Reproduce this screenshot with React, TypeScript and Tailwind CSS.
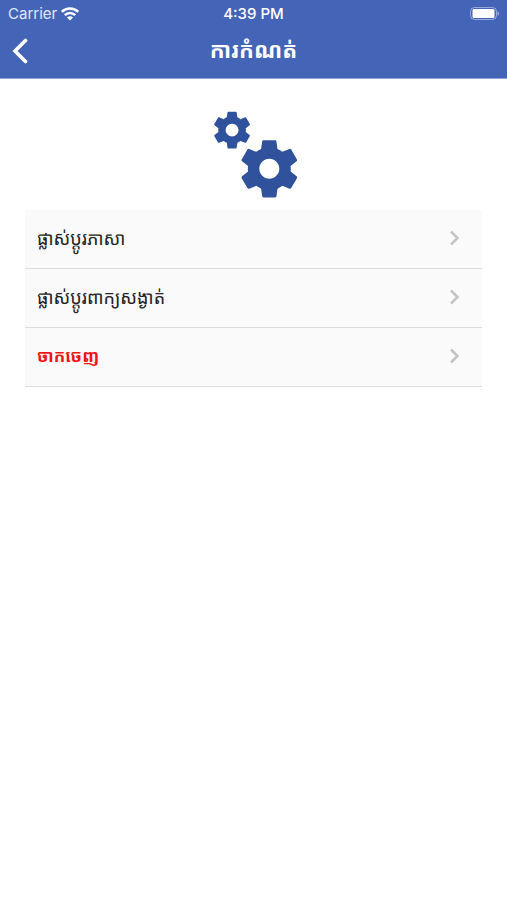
import React from 'react';

const GEAR =
  'M19.43 12.98c.04-.32.07-.64.07-.98s-.03-.66-.07-.98l2.11-1.65c.19-.15.24-.42.12-.64l-2-3.46c-.12-.22-.39-.3-.61-.22l-2.49 1c-.52-.4-1.08-.73-1.69-.98l-.38-2.65C14.46 2.18 14.25 2 14 2h-4c-.25 0-.46.18-.49.42l-.38 2.65c-.61.25-1.17.59-1.69.98l-2.49-1c-.23-.09-.49 0-.61.22l-2 3.46c-.13.22-.07.49.12.64l2.11 1.65c-.04.32-.07.65-.07.98s.03.66.07.98l-2.11 1.65c-.19.15-.24.42-.12.64l2 3.46c.12.22.39.3.61.22l2.49-1c.52.4 1.08.73 1.69.98l.38 2.65c.03.24.24.42.49.42h4c.25 0 .46-.18.49-.42l.38-2.65c.61-.25 1.17-.59 1.69-.98l2.49 1c.23.09.49 0 .61-.22l2-3.46c.12-.22.07-.49-.12-.64l-2.11-1.65zM12 15.5c-1.93 0-3.5-1.57-3.5-3.5s1.57-3.5 3.5-3.5 3.5 1.57 3.5 3.5-1.57 3.5-3.5 3.5z';

const items = [
  { label: 'ផ្លាស់ប្តូរភាសា', danger: false },
  { label: 'ផ្លាស់ប្តូរពាក្យសង្ងាត់', danger: false },
  { label: 'ចាកចេញ', danger: true }
];

const StatusBar = () => (
  <div className="grid grid-cols-3 items-center h-7 px-2 text-white text-[15px] font-['Inter',sans-serif]">
    <div className="flex items-center gap-1 text-white/85">
      <span>Carrier</span>
      <svg viewBox="0 0 18 14" className="w-[18px] h-3.5" fill="none" stroke="#fff" strokeWidth={2.5} aria-hidden="true">
        <path d="M.8 4.800a11.600 11.600 0 0 1 16.400 0" />
        <path d="M3.800 8.100a7.300 7.300 0 0 1 10.400 0" />
        <path d="M9 13.500 6 10.400a4.200 4.200 0 0 1 6 0z" fill="#fff" stroke="none" />
      </svg>
    </div>
    <span className="text-center font-medium">4:39 PM</span>
    <svg viewBox="0 0 30 14" className="w-[30px] h-3.5 justify-self-end" aria-hidden="true">
      <rect x="1.500" y="0.500" width="26" height="12" rx="4" fill="none" stroke="#fff" strokeOpacity="0.45" />
      <rect x="3.500" y="2" width="22" height="9" rx="1.500" fill="#fff" />
      <path d="M28.500 4.500v4c1.200-.4 1.500-1.100 1.500-2s-.3-1.600-1.500-2z" fill="#fff" fillOpacity="0.5" />
    </svg>
  </div>
);

export default function App() {
  return (
    <div className="min-h-screen bg-white font-['Noto_Sans_Khmer','Noto_Sans','DejaVu_Sans',sans-serif]">
      <header className="bg-[#4464b7] border-b border-[#8fa3d6]">
        <StatusBar />
        {/* Nav bar */}
        <div className="grid grid-cols-[40px_1fr_40px] items-center h-[50px] pb-1 text-white">
          <button type="button" aria-label="Back" className="flex items-center h-full pl-3">
            <svg viewBox="0 0 16 26" className="w-4 h-[26px]" fill="none" stroke="currentColor" strokeWidth={3.6} strokeLinecap="round" strokeLinejoin="miter" aria-hidden="true">
              <path d="M13.500 2.500 3 13l10.500 10.500" />
            </svg>
          </button>
          <h1 className="pb-1 text-center text-[22px] leading-none font-bold">ការកំណត់</h1>
        </div>
      </header>

      <main className="px-[25px] pt-8">
        <svg viewBox="0 0 86 87" className="mx-auto w-[86px] h-[87px]" fill="#30519c" aria-hidden="true">
          <path d={GEAR} transform="translate(-1 -3) scale(1.84)" />
          <path d={GEAR} transform="translate(24 23.500) scale(2.860)" />
        </svg>

        <ul className="mt-3">
          {items.map((item) => (
            <li key={item.label} className="border-b border-[#dcdcdc] bg-[#fafafa]">
              <button
                type="button"
                className={`flex w-full items-center justify-between h-[58px] pb-0.5 pl-3 pr-[21px] ${
                  item.danger ? 'text-[17px] text-[#f01414] font-bold' : 'text-lg text-[#222]'
                }`}
              >
                <span>{item.label}</span>
                <svg viewBox="0 0 12 16" className="w-3 h-4" fill="none" stroke="#c4c4c6" strokeWidth={2.5} aria-hidden="true">
                  <path d="m2 1.500 6.500 6.500L2 14.500" />
                </svg>
              </button>
            </li>
          ))}
        </ul>
      </main>
    </div>
  );
}
